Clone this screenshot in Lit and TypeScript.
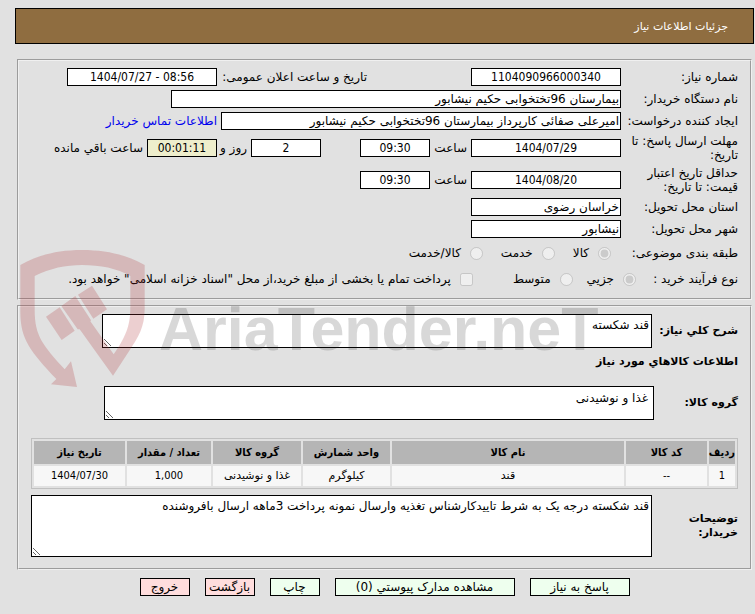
import { LitElement, html, css, svg } from "lit";
import { customElement } from "lit/decorators.js";

interface Item {
  row: string;
  code: string;
  name: string;
  unit: string;
  group: string;
  amount: string;
  date: string;
}

@customElement("brand-watermark")
export class BrandWatermark extends LitElement {
  static styles = css`
    :host {
      position: absolute;
      left: 20px;
      top: 250px;
      display: flex;
      direction: ltr;
      gap: 14px;
      align-items: flex-start;
      pointer-events: none;
    }
    .shield {
      width: 125px;
      height: 137px;
      fill: rgba(173, 46, 50, 0.23);
    }
    .name {
      font: bold 61px/80px "Liberation Sans", sans-serif;
      margin-top: 39px;
      color: rgba(25, 25, 25, 0.17);
      white-space: nowrap;
    }
  `;
  render() {
    return html`
      <svg class="shield" viewBox="60 30 373 411" aria-hidden="true">
        ${svg`
          <path d="M60 75C115 45 170 30 245 30C320 30 378 45 433 75V205C433 262 415 290 385 335L338 407L238 268L232 268L183 198L225 168L272 241L270 244L340 343C382 282 390 250 390 200V108C350 85 300 75 245 75C195 75 150 85 103 108V210C103 290 130 318 193 388L212 364L230 441L152 433L168 417C92 335 60 300 60 215Z"/>
          <path d="M137 230L178 202L223 272L184 300Z"/>
          <path d="M233 164L275 137L320 208L279 236Z"/>`}
      </svg>
      <span class="name">AriaTender.neT</span>
    `;
  }
}

@customElement("app-root")
export class AppRoot extends LitElement {
  static styles = css`
    :host {
      display: block;
      position: relative;
      direction: rtl;
      box-sizing: border-box;
      min-height: 100vh;
      padding: 8px 1px 16px 15px;
      background: #e1e1e1;
      color: #000;
      font: 12px/14px "DejaVu Sans", sans-serif;
    }
    * {
      box-sizing: border-box;
    }
    .title {
      margin: 0;
      height: 36px;
      padding: 0 25px;
      border: 1px solid #000;
      background: #8f6d40;
      color: #fff;
      font-size: 11px;
      font-weight: normal;
      line-height: 36px;
    }
    .panel {
      margin: 0 2px 5px 2px;
      padding: 7px 12px 11px;
      min-width: 0;
      border: 2px groove #f0f0f0;
    }
    .first {
      margin-top: 15px;
      padding: 5px 12px 6px;
    }
    .row {
      display: flex;
      align-items: center;
      height: 22px;
    }
    .tall {
      height: 32px;
    }
    .options {
      height: 26px;
    }
    .caption {
      flex: 0 0 117px;
      padding-left: 4px;
    }
    .short {
      flex-basis: 102px;
      padding-left: 0;
    }
    .field {
      height: 18px;
      margin: 0;
      padding: 0 1px;
      border: 1px solid #000;
      border-radius: 0;
      outline: none;
      background: #fff;
      color: #000;
      font: inherit;
    }
    .digits {
      font-family: "DejaVu Sans Condensed", "DejaVu Sans", sans-serif;
      text-align: center;
    }
    .w70 {
      width: 70px;
    }
    .w150 {
      width: 150px;
    }
    .w400 {
      width: 400px;
    }
    .w450 {
      width: 450px;
    }
    .left {
      background: #eeeecc;
    }
    .announce {
      width: 150px;
      margin-right: 104px;
      white-space: nowrap;
    }
    .hour {
      width: 41px;
      padding: 0 4px;
    }
    .days {
      margin-right: 39px;
    }
    .and {
      width: 34px;
      padding-right: 4px;
      white-space: nowrap;
    }
    .after {
      padding: 0 4px;
      white-space: nowrap;
    }
    a {
      padding: 0 4px;
      color: #0000ee;
      text-decoration: none;
      white-space: nowrap;
    }
    .choice {
      display: flex;
      align-items: center;
      gap: 9px;
      white-space: nowrap;
    }
    .choice input {
      width: 13px;
      height: 13px;
      margin: 0;
    }
    .kinds {
      display: flex;
      gap: 18px;
      padding-right: 10px;
    }
    .process {
      display: flex;
      gap: 14px;
    }
    .treasury {
      margin-right: 40px;
    }
    .block {
      display: flex;
      align-items: center;
      font-weight: bold;
    }
    .block .caption {
      flex-basis: 86px;
      padding-left: 0;
      font-size: 11px;
    }
    .block .narrow {
      flex-basis: 84px;
    }
    .area {
      flex: 0 1 550px;
      display: block;
      height: 34px;
      min-width: 0;
      margin: 0;
      padding: 3px 2px;
      border: 1px solid #000;
      border-radius: 0;
      outline: none;
      background: #fff;
      font: 12px/14px "DejaVu Sans", sans-serif;
      resize: both;
    }
    .inset {
      padding: 4px 5px;
    }
    .notes {
      flex: 1;
      height: 62px;
    }
    .subtitle {
      margin: 7px 0 17px;
      font-size: 11px;
      font-weight: bold;
      line-height: 14px;
    }
    .items {
      width: 100%;
      margin: 18px 0 6px;
      border: 1px solid #c0c0c0;
      border-collapse: separate;
      border-spacing: 2px;
      table-layout: fixed;
      text-align: center;
    }
    th,
    td {
      padding: 0;
      font-size: 11px;
      white-space: nowrap;
    }
    th {
      height: 23px;
      background: #b5b5b5;
      font-family: "DejaVu Sans Condensed", "DejaVu Sans", sans-serif;
    }
    td {
      height: 20px;
      background: #f7f7f7;
    }
    .c1 { width: 26px; }
    .c2 { width: 81px; }
    .c4 { width: 87px; }
    .c5 { width: 88px; }
    .c6 { width: 84px; }
    .c7 { width: 91px; }
    .actions {
      display: flex;
      justify-content: center;
      gap: 15px;
      margin-top: 8px;
    }
    button {
      width: 50px;
      height: 18px;
      padding: 0;
      border: 1px solid #000;
      border-radius: 0;
      background: #eeffee;
      color: #000;
      font: inherit;
      line-height: 14px;
      white-space: nowrap;
    }
    .reply {
      width: 100px;
    }
    .docs {
      width: 180px;
    }
    .exit {
      background: #ffdddd;
    }
  `;

  private items: Item[] = [
    {
      row: "1",
      code: "--",
      name: "قند",
      unit: "کیلوگرم",
      group: "غذا و نوشیدنی",
      amount: "1,000",
      date: "1404/07/30",
    },
  ];

  private field(id: string, value: string, cls: string) {
    return html`<input class="field ${cls}" id=${id} type="text" readonly .value=${value} />`;
  }

  private choice(name: string, text: string, checked = false) {
    return html`<label class="choice"
      ><input type="radio" name=${name} disabled .checked=${checked} /><span>${text}</span></label
    >`;
  }

  render() {
    return html`
      <h1 class="title">جزئیات اطلاعات نیاز</h1>

      <fieldset class="panel first">
        <div class="row">
          <label class="caption" for="number">شماره نیاز:</label>
          ${this.field("number", "1104090966000340", "digits w150")}
          <label class="announce" for="announced">تاریخ و ساعت اعلان عمومی:</label>
          ${this.field("announced", "08:56 - 1404/07/27", "digits w150")}
        </div>
        <div class="row">
          <label class="caption" for="buyer">نام دستگاه خریدار:</label>
          ${this.field("buyer", "بیمارستان 96تختخوابی حکیم نیشابور", "w450")}
        </div>
        <div class="row">
          <label class="caption" for="creator">ایجاد کننده درخواست:</label>
          ${this.field("creator", "امیرعلی صفائی کارپرداز بیمارستان 96تختخوابی حکیم نیشابور", "w400")}
          <a href="#contact">اطلاعات تماس خریدار</a>
        </div>
        <div class="row tall">
          <label class="caption" for="deadline">مهلت ارسال پاسخ: تا تاریخ:</label>
          ${this.field("deadline", "1404/07/29", "digits w150")}
          <label class="hour" for="deadline-hour">ساعت</label>
          ${this.field("deadline-hour", "09:30", "digits w70")}
          ${this.field("days", "2", "digits w70 days")}
          <label class="and" for="days">روز و</label>
          ${this.field("remaining", "00:01:11", "digits w70 left")}
          <label class="after" for="remaining">ساعت باقي مانده</label>
        </div>
        <div class="row tall">
          <label class="caption" for="validity">حداقل تاریخ اعتبار قیمت: تا تاریخ:</label>
          ${this.field("validity", "1404/08/20", "digits w150")}
          <label class="hour" for="validity-hour">ساعت</label>
          ${this.field("validity-hour", "09:30", "digits w70")}
        </div>
        <div class="row">
          <label class="caption" for="province">استان محل تحویل:</label>
          ${this.field("province", "خراسان رضوی", "w150")}
        </div>
        <div class="row">
          <label class="caption" for="city">شهر محل تحویل:</label>
          ${this.field("city", "نیشابور", "w150")}
        </div>
        <div class="row options">
          <span class="caption">طبقه بندی موضوعی:</span>
          <div class="kinds">
            ${this.choice("kind", "کالا", true)} ${this.choice("kind", "خدمت")}
            ${this.choice("kind", "کالا/خدمت")}
          </div>
        </div>
        <div class="row options">
          <span class="caption short">نوع فرآیند خرید :</span>
          <div class="process">
            ${this.choice("process", "جزیي", true)} ${this.choice("process", "متوسط")}
          </div>
          <label class="choice treasury"
            ><input type="checkbox" disabled /><span
              >پرداخت تمام یا بخشی از مبلغ خرید،از محل "اسناد خزانه اسلامی" خواهد بود.</span
            ></label
          >
        </div>
      </fieldset>

      <fieldset class="panel">
        <div class="block">
          <label class="caption" for="summary">شرح کلي نياز:</label>
          <textarea class="area" id="summary" readonly .value=${"قند شکسته"}></textarea>
        </div>
        <h2 class="subtitle">اطلاعات کالاهاي مورد نياز</h2>
        <div class="block">
          <label class="caption narrow" for="group">گروه کالا:</label>
          <textarea class="area inset" id="group" readonly .value=${"غذا و نوشیدنی"}></textarea>
        </div>
        <table class="items">
          <thead>
            <tr>
              <th class="c1">ردیف</th>
              <th class="c2">کد کالا</th>
              <th>نام کالا</th>
              <th class="c4">واحد شمارش</th>
              <th class="c5">گروه کالا</th>
              <th class="c6">تعداد / مقدار</th>
              <th class="c7">تاریخ نیاز</th>
            </tr>
          </thead>
          <tbody>
            ${this.items.map(
              (i) => html`<tr>
                <td class="digits">${i.row}</td>
                <td class="digits">${i.code}</td>
                <td>${i.name}</td>
                <td>${i.unit}</td>
                <td>${i.group}</td>
                <td class="digits">${i.amount}</td>
                <td class="digits">${i.date}</td>
              </tr>`
            )}
          </tbody>
        </table>
        <div class="block">
          <label class="caption" for="notes">توضیحات خریدار:</label>
          <textarea
            class="area notes"
            id="notes"
            readonly
            .value=${"قند شکسته درجه یک به شرط تاییدکارشناس تغذیه وارسال نمونه پرداخت 3ماهه ارسال بافروشنده"}
          ></textarea>
        </div>
      </fieldset>

      <div class="actions">
        <button class="reply" type="button">پاسخ به نیاز</button>
        <button class="docs" type="button">مشاهده مدارک پیوستي (0)</button>
        <button type="button">چاپ</button>
        <button class="exit" type="button">بازگشت</button>
        <button class="exit" type="button">خروج</button>
      </div>

      <brand-watermark></brand-watermark>
    `;
  }
}
